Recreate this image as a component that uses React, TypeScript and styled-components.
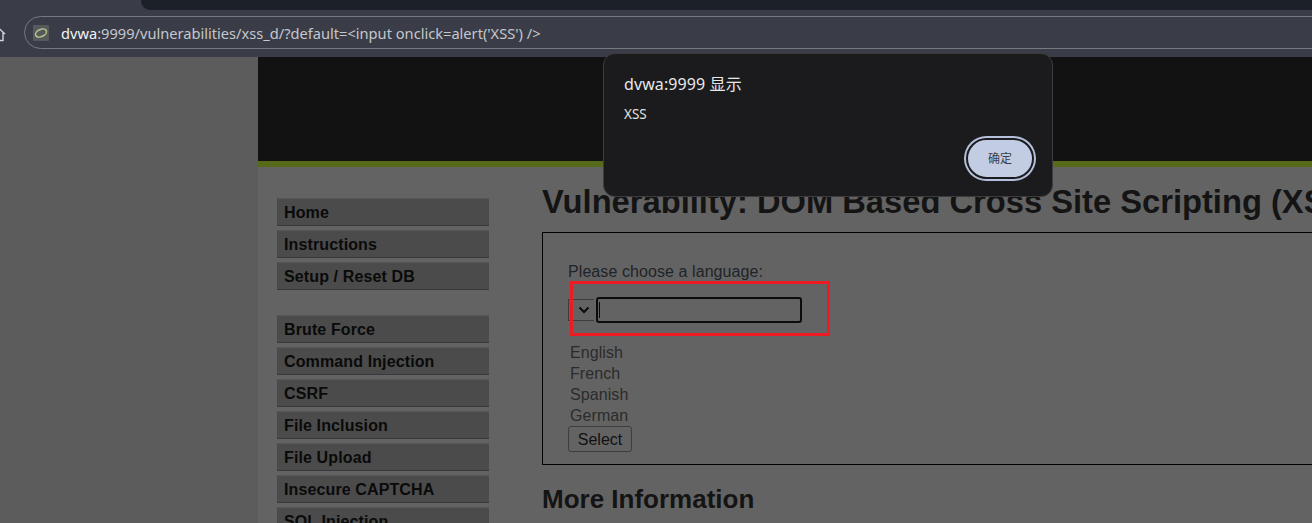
import { createGlobalStyle } from "styled-components";
import styled from "styled-components";

const GlobalStyle = createGlobalStyle`
  html, body {
    margin: 0;
    padding: 0;
    height: 100%;
    overflow: hidden;
    background: #5c5c5c;
  }
  #root {
    height: 100%;
  }
`;

const Browser = styled.div`
  position: relative;
  width: 1312px;
  height: 523px;
  overflow: hidden;
  display: flex;
  flex-direction: column;
  font-family: "Liberation Sans", Arial, sans-serif;
`;

const TabStrip = styled.div`
  height: 10px;
  background: #3a3d47;
  padding-left: 141px;
  flex: none;
`;

const ActiveTabGap = styled.div`
  height: 10px;
  background: #1c2029;
  border-bottom-left-radius: 9px;
`;

const Toolbar = styled.div`
  height: 47px;
  flex: none;
  background: #3a3d47;
  padding: 6px 0 0 24px;
  box-sizing: border-box;
  position: relative;
`;

const HomeGlyph = styled.svg`
  position: absolute;
  left: -10px;
  top: 16px;
`;

const UrlPill = styled.div`
  width: 1400px;
  height: 33px;
  box-sizing: border-box;
  border: 1px solid #777981;
  border-radius: 17px;
  display: flex;
  align-items: center;
  padding-left: 8px;
  gap: 12px;
`;

const Favicon = styled.div`
  width: 16px;
  height: 16px;
  background: #565a5c;
  border-radius: 1px;
  display: flex;
  align-items: center;
  justify-content: center;
`;

const UrlText = styled.div`
  font-family: "Noto Sans", sans-serif;
  font-size: 14.64px;
  line-height: 20px;
  padding-top: 1px;
  color: #c5c7cc;
  white-space: nowrap;
`;

const UrlHost = styled.span`
  color: #f2f3f5;
`;

const Viewport = styled.div`
  flex: 1;
  display: flex;
  background: #5c5c5c;
  padding-left: 258px;
  min-height: 0;
`;

const Page = styled.div`
  flex: none;
  width: 1092px;
  background: #636363;
  height: 100%;
`;

const Banner = styled.div`
  height: 104px;
  background: #121212;
  border-bottom: 6px solid #566a1a;
`;

const Columns = styled.div`
  display: flex;
  padding: 31px 0 0 19px;
`;

const Sidebar = styled.nav`
  width: 212px;
  flex: none;
  display: flex;
  flex-direction: column;
  gap: 25px;
`;

const MenuBlock = styled.ul`
  list-style: none;
  margin: 0;
  padding: 0;
  display: flex;
  flex-direction: column;
  gap: 4px;
`;

const MenuItem = styled.li`
  height: 28px;
  box-sizing: border-box;
  background: #4b4b4b;
  border-top: 1px solid #565656;
  border-bottom: 1px solid #38383e;
  border-left: 1px solid #484848;
  padding-left: 6px;
  font-size: 16px;
  font-weight: 700;
  line-height: 27px;
  letter-spacing: 0.12px;
  color: #0a0a0a;
  white-space: nowrap;
`;

const Main = styled.main`
  margin-left: 53px;
  width: 900px;
  flex: none;
`;

const Title = styled.h1`
  margin: -15px 0 0;
  font-size: 32.7px;
  line-height: 37px;
  font-weight: 700;
  color: #141414;
  white-space: nowrap;
`;

const FormBox = styled.div`
  margin-top: 12px;
  height: 233px;
  box-sizing: border-box;
  border: 1px solid #000;
  padding: 30px 0 0 25px;
`;

const Prompt = styled.div`
  font-size: 16px;
  line-height: 18px;
  letter-spacing: 0.08px;
  color: #1f2328;
`;

const ComboRow = styled.div`
  display: flex;
  align-items: center;
  margin-top: 16px;
  gap: 2px;
`;

const SelectArrow = styled.div`
  width: 26px;
  height: 22px;
  box-sizing: border-box;
  border: 1px solid #3e3e3e;
  border-right: 0;
  padding-left: 4px;
  display: flex;
  align-items: center;
  justify-content: center;
`;

const TextInput = styled.div`
  width: 206px;
  height: 26px;
  box-sizing: border-box;
  border: 2px solid #0c0c0c;
  border-radius: 3px;
  padding: 3px 0 0 1px;
`;

const Caret = styled.div`
  width: 1px;
  height: 16px;
  background: #0c0c0c;
`;

const OptionList = styled.div`
  margin: 19px 0 0 2px;
`;

const OptionRow = styled.div`
  font-size: 16px;
  line-height: 21px;
  letter-spacing: 0.08px;
  color: #2b2b2b;
`;

const SelectButton = styled.div`
  width: 64px;
  height: 26px;
  box-sizing: border-box;
  border: 1px solid #3e3e3e;
  border-radius: 3px;
  font-size: 16px;
  line-height: 25px;
  text-align: center;
  color: #111;
`;

const SubTitle = styled.h2`
  margin: 20px 0 0;
  font-size: 26px;
  line-height: 29px;
  font-weight: 700;
  color: #141414;
`;

const Annotation = styled.div`
  position: absolute;
  left: 570px;
  top: 281px;
  width: 260px;
  height: 55px;
  box-sizing: border-box;
  border: 3px solid #ed1c24;
`;

const Dialog = styled.div`
  position: absolute;
  left: 603px;
  top: 53px;
  width: 450px;
  height: 144px;
  box-sizing: border-box;
  background: #1b1b1d;
  border: 1px solid #3c3c3f;
  border-radius: 12px;
  padding: 20px 18px 17px 20px;
  display: flex;
  flex-direction: column;
  font-family: "Noto Sans", "Noto Sans CJK SC", sans-serif;
`;

const DialogTitle = styled.div`
  font-size: 16px;
  line-height: 20px;
  letter-spacing: 0.1px;
  color: #e8e8e8;
`;

const DialogMessage = styled.div`
  margin-top: 11px;
  font-size: 13.5px;
  line-height: 18px;
  color: #e3e3e3;
`;

const DialogActions = styled.div`
  margin-top: auto;
  display: flex;
  justify-content: flex-end;
`;

const ConfirmButton = styled.div`
  width: 68px;
  height: 41px;
  box-sizing: border-box;
  border-radius: 21px;
  background: #c2cde4;
  border: 2px solid #1b1b1d;
  box-shadow: 0 0 0 2px #b4c0dc;
  font-size: 12px;
  line-height: 37px;
  text-align: center;
  color: #3a3d45;
`;

const menuBlocks = [
  ["Home", "Instructions", "Setup / Reset DB"],
  [
    "Brute Force",
    "Command Injection",
    "CSRF",
    "File Inclusion",
    "File Upload",
    "Insecure CAPTCHA",
    "SQL Injection",
  ],
];

const languages = ["English", "French", "Spanish", "German"];

export default function App() {
  return (
    <Browser>
      <GlobalStyle />
      <TabStrip>
        <ActiveTabGap />
      </TabStrip>
      <Toolbar>
        <HomeGlyph width="16" height="16" viewBox="0 0 16 16" fill="none">
          <path
            d="M1 8 8 1.5 15 8M3 6.5V14.5H13V6.5"
            stroke="#d5d6da"
            strokeWidth="1.4"
          />
        </HomeGlyph>
        <UrlPill>
          <Favicon>
            <svg width="14" height="12" viewBox="0 0 14 12" fill="none">
              <ellipse
                cx="7"
                cy="6"
                rx="5.8"
                ry="3.6"
                transform="rotate(-24 7 6)"
                stroke="#b4c88a"
                strokeWidth="1.5"
              />
            </svg>
          </Favicon>
          <UrlText>
            <UrlHost>dvwa</UrlHost>:9999/vulnerabilities/xss_d/?default=&lt;input
            onclick=alert('XSS') /&gt;
          </UrlText>
        </UrlPill>
      </Toolbar>
      <Viewport>
        <Page>
          <Banner />
          <Columns>
            <Sidebar>
              {menuBlocks.map((block) => (
                <MenuBlock key={block[0]}>
                  {block.map((item) => (
                    <MenuItem key={item}>{item}</MenuItem>
                  ))}
                </MenuBlock>
              ))}
            </Sidebar>
            <Main>
              <Title>Vulnerability: DOM Based Cross Site Scripting (XSS)</Title>
              <FormBox>
                <Prompt>Please choose a language:</Prompt>
                <ComboRow>
                  <SelectArrow>
                    <svg width="12" height="8" viewBox="0 0 12 8" fill="none">
                      <path
                        d="M1.5 1.5 6 6l4.5-4.5"
                        stroke="#0c0c0c"
                        strokeWidth="2"
                      />
                    </svg>
                  </SelectArrow>
                  <TextInput>
                    <Caret />
                  </TextInput>
                </ComboRow>
                <OptionList>
                  {languages.map((lang) => (
                    <OptionRow key={lang}>{lang}</OptionRow>
                  ))}
                </OptionList>
                <SelectButton>Select</SelectButton>
              </FormBox>
              <SubTitle>More Information</SubTitle>
            </Main>
          </Columns>
        </Page>
      </Viewport>
      <Annotation />
      <Dialog>
        <DialogTitle>dvwa:9999 显示</DialogTitle>
        <DialogMessage>XSS</DialogMessage>
        <DialogActions>
          <ConfirmButton>确定</ConfirmButton>
        </DialogActions>
      </Dialog>
    </Browser>
  );
}
